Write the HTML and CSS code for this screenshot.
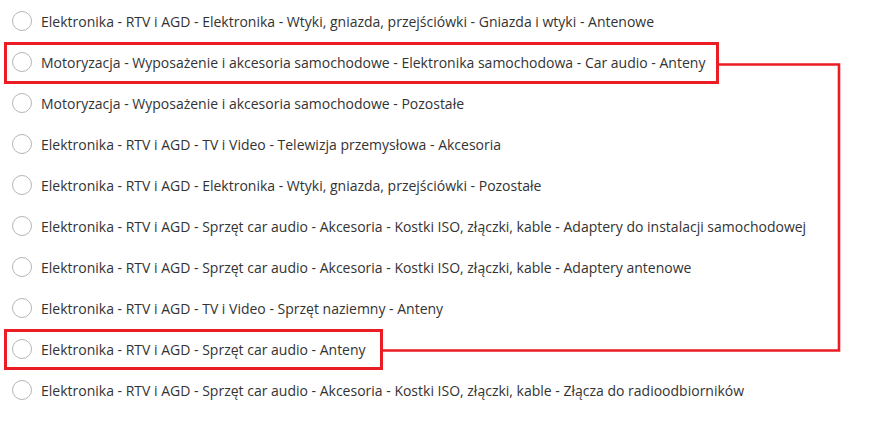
FILE: index.html
```html
<!DOCTYPE html>
<html lang="pl">
<head>
<meta charset="utf-8">
<title>Kategorie</title>
<link rel="stylesheet" href="styles.css">
</head>
<body>
<div class="page">
  <ul class="options">
    <li class="option"><span class="radio"></span><span class="label">Elektronika - RTV i AGD - Elektronika - Wtyki, gniazda, przejściówki - Gniazda i wtyki - Antenowe</span></li>
    <li class="option"><span class="radio"></span><span class="label">Motoryzacja - Wyposażenie i akcesoria samochodowe - Elektronika samochodowa - Car audio - Anteny</span></li>
    <li class="option"><span class="radio"></span><span class="label">Motoryzacja - Wyposażenie i akcesoria samochodowe - Pozostałe</span></li>
    <li class="option"><span class="radio"></span><span class="label">Elektronika - RTV i AGD - TV i Video - Telewizja przemysłowa - Akcesoria</span></li>
    <li class="option"><span class="radio"></span><span class="label">Elektronika - RTV i AGD - Elektronika - Wtyki, gniazda, przejściówki - Pozostałe</span></li>
    <li class="option"><span class="radio"></span><span class="label">Elektronika - RTV i AGD - Sprzęt car audio - Akcesoria - Kostki ISO, złączki, kable - Adaptery do instalacji samochodowej</span></li>
    <li class="option"><span class="radio"></span><span class="label">Elektronika - RTV i AGD - Sprzęt car audio - Akcesoria - Kostki ISO, złączki, kable - Adaptery antenowe</span></li>
    <li class="option"><span class="radio"></span><span class="label">Elektronika - RTV i AGD - TV i Video - Sprzęt naziemny - Anteny</span></li>
    <li class="option"><span class="radio"></span><span class="label">Elektronika - RTV i AGD - Sprzęt car audio - Anteny</span></li>
    <li class="option"><span class="radio"></span><span class="label">Elektronika - RTV i AGD - Sprzęt car audio - Akcesoria - Kostki ISO, złączki, kable - Złącza do radioodbiorników</span></li>
  </ul>
  <svg class="annotations" width="878" height="421" viewBox="0 0 878 421" aria-hidden="true">
    <rect x="5.5" y="43.5" width="712" height="39" fill="none" stroke="#ec1c24" stroke-width="3"/>
    <rect x="5.5" y="330.5" width="376" height="38" fill="none" stroke="#ec1c24" stroke-width="3"/>
    <polyline points="719,64.5 839,64.5 839,350.5 383,350.5" fill="none" stroke="#ec1c24" stroke-width="2.6"/>
  </svg>
</div>
</body>
</html>
```
FILE: styles.css
```css
html, body {
  margin: 0;
  padding: 0;
  background: #ffffff;
}
.page {
  position: relative;
  width: 878px;
  height: 421px;
  overflow: hidden;
  font-family: "Open Sans", "Noto Sans", sans-serif;
  font-size: 14px;
  color: #333333;
}
.options {
  list-style: none;
  margin: 0;
  padding: 0 0 0 12px;
}
.option {
  display: flex;
  align-items: center;
  height: 41px;
  gap: 9px;
}
.radio {
  box-sizing: border-box;
  flex: none;
  width: 20px;
  height: 20px;
  border: 1px solid #b5b5b5;
  border-radius: 50%;
  background: #fff;
  margin-top: 1px;
}
.label {
  white-space: nowrap;
  line-height: 20px;
  padding-top: 2px;
}
.annotations {
  position: absolute;
  left: 0;
  top: 0;
}
```
